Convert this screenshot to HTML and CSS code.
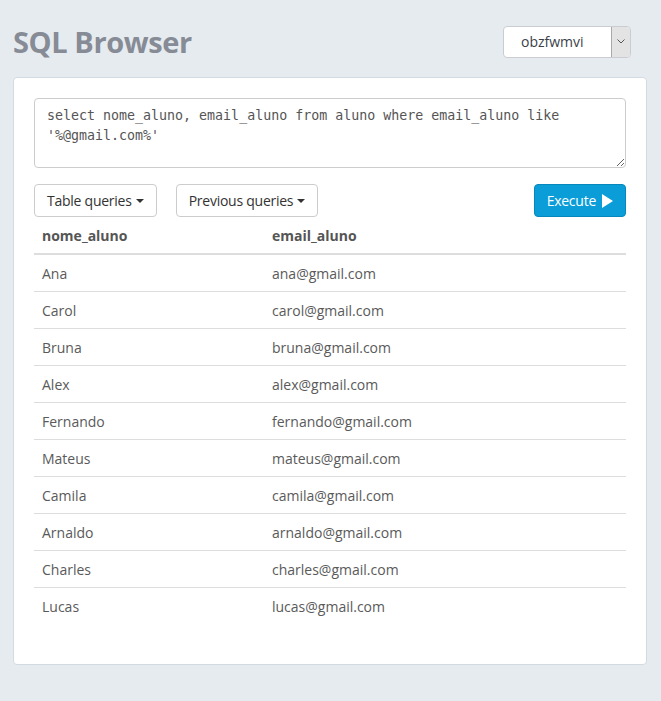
FILE: index.html
```html
<!DOCTYPE html>
<html>
<head>
<meta charset="utf-8">
<link rel="stylesheet" href="styles.css">
</head>
<body>
<div class="page">
  <header class="top">
    <h1 class="title">SQL Browser</h1>
    <div class="select">
      <span class="select-value">obzfwmvi</span>
      <span class="select-arrow"><svg width="8" height="5" viewBox="0 0 8 5"><path d="M0.5 0.5 L4 4 L7.5 0.5" fill="none" stroke="#555" stroke-width="1"/></svg></span>
    </div>
  </header>
  <main class="card">
    <textarea class="query" spellcheck="false">select nome_aluno, email_aluno from aluno where email_aluno like '%@gmail.com%'</textarea>
    <div class="toolbar">
      <div class="left-buttons">
        <button class="btn">Table queries<span class="caret"></span></button>
        <button class="btn">Previous queries<span class="caret"></span></button>
      </div>
      <button class="btn btn-primary">Execute<svg class="play" width="11" height="14" viewBox="0 0 11 14"><path d="M0 0 L11 7 L0 14 Z" fill="#fff"/></svg></button>
    </div>
    <table class="results">
      <thead>
        <tr><th class="c1">nome_aluno</th><th>email_aluno</th></tr>
      </thead>
      <tbody>
        <tr><td>Ana</td><td>ana@gmail.com</td></tr>
        <tr><td>Carol</td><td>carol@gmail.com</td></tr>
        <tr><td>Bruna</td><td>bruna@gmail.com</td></tr>
        <tr><td>Alex</td><td>alex@gmail.com</td></tr>
        <tr><td>Fernando</td><td>fernando@gmail.com</td></tr>
        <tr><td>Mateus</td><td>mateus@gmail.com</td></tr>
        <tr><td>Camila</td><td>camila@gmail.com</td></tr>
        <tr><td>Arnaldo</td><td>arnaldo@gmail.com</td></tr>
        <tr><td>Charles</td><td>charles@gmail.com</td></tr>
        <tr><td>Lucas</td><td>lucas@gmail.com</td></tr>
      </tbody>
    </table>
  </main>
</div>
</body>
</html>
```
FILE: styles.css
```css
* { box-sizing: border-box; }
html, body {
  margin: 0;
  padding: 0;
  background: #e5ebef;
}
body {
  font-family: "Open Sans", "Noto Sans", sans-serif;
  font-size: 14px;
  color: #555;
  min-height: 701px;
}
.page {
  padding: 0 14px 0 13px;
}
.top {
  display: flex;
  justify-content: space-between;
  align-items: center;
  padding: 25px 16px 19px 0;
}
.title {
  margin: 0;
  font-size: 29px;
  line-height: 33px;
  font-weight: 700;
  color: #868b96;
  letter-spacing: -0.4px;
}
.select {
  display: flex;
  width: 128px;
  height: 32px;
  background: #fff;
  border: 1px solid #c9cdd2;
  border-radius: 4px;
  overflow: hidden;
}
.select-value {
  flex: 1;
  padding-left: 17px;
  line-height: 30px;
  color: #3a3f4a;
}
.select-arrow {
  width: 19px;
  display: flex;
  align-items: center;
  justify-content: center;
  background: #e3e3e3;
  border-left: 1px solid #a9a9a9;
}
.card {
  background: #fff;
  border: 1px solid #d3dbe2;
  border-radius: 4px;
  padding: 20px;
}
.query {
  display: block;
  width: 100%;
  height: 70px;
  margin: 0 0 16px 0;
  padding: 7px 12px 6px;
  border: 1px solid #ccc;
  border-radius: 4px;
  font-family: "DejaVu Sans Mono", monospace;
  font-size: 13.3px;
  line-height: 20px;
  color: #555;
  resize: vertical;
  outline: none;
}
.toolbar {
  display: flex;
  justify-content: space-between;
  align-items: center;
}
.left-buttons {
  display: flex;
  gap: 19px;
}
.btn {
  display: inline-flex;
  align-items: center;
  height: 33px;
  padding: 0 12px;
  background: #fff;
  border: 1px solid #ccc;
  border-radius: 4px;
  font-family: "Open Sans", "Noto Sans", sans-serif;
  font-size: 14px;
  letter-spacing: -0.25px;
  color: #333;
  cursor: pointer;
}
.caret {
  display: inline-block;
  width: 0;
  height: 0;
  margin-left: 4px;
  border-top: 4px solid #333;
  border-left: 4px solid transparent;
  border-right: 4px solid transparent;
}
.btn-primary {
  background: #0a9dd8;
  border-color: #0788bd;
  color: #fff;
}
.play {
  margin-left: 6px;
}
.results {
  width: 100%;
  border-collapse: collapse;
  margin-bottom: 20px;
}
.results th, .results td {
  text-align: left;
  padding: 8px;
  line-height: 20px;
}
.results th {
  font-weight: 700;
  color: #555;
  padding-top: 9px;
  padding-bottom: 7px;
  border-bottom: 2px solid #ddd;
}
.results th.c1 {
  width: 230px;
}
.results td {
  border-top: 1px solid #ddd;
  color: #5a5a5a;
  padding-top: 9px;
  padding-bottom: 7px;
}
.results tbody tr:first-child td {
  border-top: 0;
}
```
